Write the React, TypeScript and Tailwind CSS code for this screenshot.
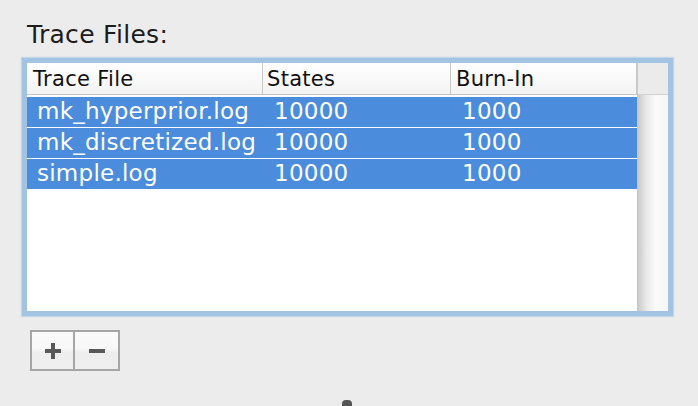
import React from "react";

const rows = [
  { file: "mk_hyperprior.log", states: "10000", burn: "1000" },
  { file: "mk_discretized.log", states: "10000", burn: "1000" },
  { file: "simple.log", states: "10000", burn: "1000" },
];

export default function App() {
  return (
    <div className="w-[698px] h-[406px] overflow-hidden bg-[#ececec] font-['DejaVu_Sans',sans-serif] flex flex-col">
      <div className="ml-[27px] mt-[19px] h-[31px] leading-[31px] text-[25px] tracking-[0.3px] text-[#1c1c1c]">
        Trace Files:
      </div>
      <div className="ml-[22px] mt-[8px] w-[651px] h-[260px] border-[5px] border-[#a2c3e2] shadow-[0_0_1px_1px_rgba(165,198,228,0.55)] bg-white flex">
        <div className="w-[610px] flex flex-col">
          <div className="h-[32px] flex border-b border-[#c2c2c2] bg-[linear-gradient(to_bottom,#ffffff,#f3f3f3)] text-[21px] tracking-[0.3px] text-[#111]">
            <div className="w-[236px] border-r border-[#c8c8c8] pl-[6px] flex items-center pt-[2px]">Trace File</div>
            <div className="w-[188px] border-r border-[#c8c8c8] pl-[4px] flex items-center pt-[2px]">States</div>
            <div className="w-[186px] border-r border-[#c8c8c8] pl-[5px] flex items-center pt-[2px]">Burn-In</div>
          </div>
          <div className="pt-[2px] flex flex-col gap-[1px]">
            {rows.map((r) => (
              <div key={r.file} className="h-[30px] flex items-center bg-[#4b8cdc] text-white text-[23px] tracking-[0.25px] leading-[30px]">
                <div className="w-[236px] pl-[10px] pb-[3px]">{r.file}</div>
                <div className="w-[188px] pl-[11px] pb-[3px]">{r.states}</div>
                <div className="w-[186px] pl-[11px] pb-[3px]">{r.burn}</div>
              </div>
            ))}
          </div>
        </div>
        <div className="w-[31px] flex flex-col">
          <div className="h-[32px] bg-[#ebebeb] border-l border-[#c8c8c8] border-b border-b-[#d0d0d0]"></div>
          <div className="flex-1 bg-[linear-gradient(to_right,#c6c6c6,#e9e9e9_30%,#fafafa_60%,#f6f6f6)]"></div>
        </div>
      </div>
      <div className="ml-[30px] mt-[14px] w-[90px] h-[41px] border-2 border-[#a6a6a6] flex bg-[linear-gradient(to_bottom,#fafafa_0%,#f7f7f7_45%,#eeeeee_55%,#efefef_100%)]">
        <div className="w-[43px] border-r-2 border-[#a6a6a6] flex items-center justify-center">
          <svg width="16" height="16" viewBox="0 0 16 16">
            <rect x="6" y="0" width="4" height="16" fill="#585858" />
            <rect x="0" y="6" width="16" height="4" fill="#585858" />
          </svg>
        </div>
        <div className="flex-1 flex items-center justify-center">
          <svg width="16" height="16" viewBox="0 0 16 16">
            <rect x="0" y="6" width="16" height="4" fill="#585858" />
          </svg>
        </div>
      </div>
      <div className="ml-[342px] mt-[29px] w-[10px] h-[6px] rounded-t-[4px] bg-[#555]"></div>
    </div>
  );
}
